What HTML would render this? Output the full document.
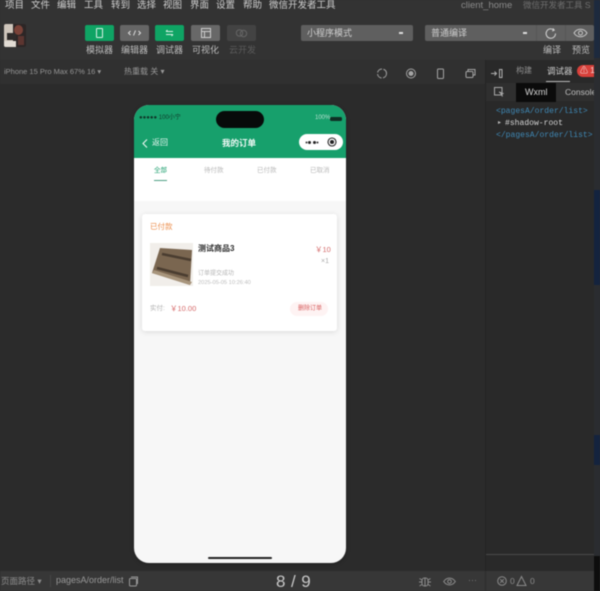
<!DOCTYPE html>
<html><head><meta charset="utf-8">
<style>
html,body{margin:0;padding:0;background:#2d2d2d}
#r{position:relative;width:600px;height:591px;overflow:hidden;background:#2d2d2d;font-family:"Liberation Sans","Noto Sans CJK SC",sans-serif;filter:blur(.5px)}
#r div,#r svg,#r span.a{position:absolute}
.t{white-space:nowrap;line-height:1}
.btn{width:29px;height:16px;top:25px;border-radius:2px}
.lb{top:46px;font-size:9px;color:#bdbdbd;white-space:nowrap;line-height:1}
.m{top:1px;font-size:9.5px;color:#d0d0d0;white-space:nowrap;line-height:1}
.mono{font-family:"Liberation Mono","DejaVu Sans Mono",monospace;font-size:8.05px;line-height:1;white-space:nowrap}
</style></head><body>
<div id="r">
<!-- top bars -->
<div style="left:0;top:0;width:600px;height:60px;background:#333"></div>
<div style="left:0;top:60px;width:486px;height:24px;background:#303030"></div>
<div style="left:0;top:84px;width:486px;height:487px;background:#2b2b2b"></div>
<div style="left:486px;top:60px;width:108px;height:511px;background:#292929"></div>
<div style="left:485px;top:60px;width:1px;height:511px;background:#242424"></div>
<div style="left:594px;top:0;width:6px;height:591px;background:#2a2c30"></div>
<div style="left:594px;top:0;width:6px;height:58px;background:#1d2a3e"></div>
<div style="left:594px;top:190px;width:6px;height:50px;background:#13233f"></div>
<div style="left:594px;top:240px;width:6px;height:45px;background:#14233e"></div>
<div style="left:594px;top:435px;width:6px;height:30px;background:#14233e"></div>
<div style="left:594px;top:556px;width:6px;height:35px;background:#0d0d0d"></div>
<!-- menu -->
<div class="m" style="left:5px">项目</div>
<div class="m" style="left:31px">文件</div>
<div class="m" style="left:57px">编辑</div>
<div class="m" style="left:84px">工具</div>
<div class="m" style="left:111px">转到</div>
<div class="m" style="left:137px">选择</div>
<div class="m" style="left:163px">视图</div>
<div class="m" style="left:190px">界面</div>
<div class="m" style="left:216px">设置</div>
<div class="m" style="left:243px">帮助</div>
<div class="m" style="left:269px">微信开发者工具</div>
<div class="t" style="left:461px;top:1px;font-size:9.5px;color:#8a8a8a">client_home</div>
<div class="t" style="left:523px;top:1px;font-size:8.5px;color:#6f6f6f">微信开发者工具 S</div>
<!-- avatar -->
<div style="left:4px;top:24px;width:22px;height:23px;background:#2c2626;border-radius:2px;overflow:hidden">
  <div style="left:0;top:0;width:9px;height:23px;background:#cfc6bc"></div>
  <div style="left:3px;top:9px;width:9px;height:7px;background:#2e2b2a"></div>
  <div style="left:0;top:17px;width:12px;height:6px;background:#e2dcd4"></div>
  <div style="left:10px;top:1px;width:9px;height:10px;background:#7a4238;border-radius:50%"></div>
  <div style="left:14px;top:12px;width:6px;height:9px;background:#5c3530"></div>
</div>
<!-- toolbar buttons -->
<div class="btn" style="left:85px;background:#0fa464"></div>
<div class="btn" style="left:120px;background:#666"></div>
<div class="btn" style="left:155px;background:#0fa464"></div>
<div class="btn" style="left:191px;background:#686868"></div>
<div class="btn" style="left:227px;background:#434343"></div>
<svg style="left:85px;top:25px" width="29" height="16" fill="none" stroke="#d9f2e6" stroke-width="1"><rect x="11.5" y="3.5" width="6" height="9" rx=".5"/></svg>
<svg style="left:120px;top:25px" width="29" height="16" fill="none" stroke="#e0e0e0" stroke-width="1"><path d="M10.500 6l-2 2 2 2M18.500 6l2 2-2 2M15.500 5.500l-2 5"/></svg>
<svg style="left:155px;top:25px" width="29" height="16" fill="none" stroke="#d9f2e6" stroke-width="1"><path d="M11 6.500h7M11 9.500h7M12.500 5l-1.500 1.500M16.500 11l1.500-1.500"/></svg>
<svg style="left:191px;top:25px" width="29" height="16" fill="none" stroke="#cfcfcf" stroke-width="1"><rect x="10.500" y="3.500" width="9" height="9"/><path d="M10.500 6.500h9M13.500 6.500v6"/></svg>
<svg style="left:227px;top:25px" width="29" height="16" fill="none" stroke="#666" stroke-width="1"><circle cx="12.500" cy="8" r="3.200"/><circle cx="16.500" cy="8.500" r="3.200"/></svg>
<div class="lb" style="left:86px">模拟器</div>
<div class="lb" style="left:121px">编辑器</div>
<div class="lb" style="left:156px">调试器</div>
<div class="lb" style="left:192px">可视化</div>
<div class="lb" style="left:229px;color:#5b5b5b">云开发</div>
<!-- selects -->
<div style="left:301px;top:25px;width:112px;height:16px;background:#5f5f5f;border-radius:2px"></div>
<div class="t" style="left:307px;top:29px;font-size:9px;color:#cfcfcf">小程序模式</div>
<div style="left:399px;top:32px;width:4px;height:2px;background:#ddd"></div>
<div style="left:425px;top:25px;width:169px;height:16px;background:#5f5f5f;border-radius:2px"></div>
<div class="t" style="left:431px;top:29px;font-size:9px;color:#cfcfcf">普通编译</div>
<div style="left:523px;top:32px;width:4px;height:2px;background:#ddd"></div>
<div style="left:536px;top:25px;width:1px;height:16px;background:#565656"></div>
<div style="left:565px;top:25px;width:1px;height:16px;background:#565656"></div>
<svg style="left:544px;top:27px" width="14" height="13" fill="none" stroke="#d4d4d4" stroke-width="1"><path d="M11.500 6.500a4.700 4.700 0 1 1-1.600-3.500"/><path d="M9 1.500l1.200 1.700-2 .8"/></svg>
<svg style="left:573px;top:28px" width="15" height="10" fill="none" stroke="#c8c8c8" stroke-width="1"><path d="M1 5c3-5 10-5 13 0-3 5-10 5-13 0z"/><circle cx="7.500" cy="5" r="2"/></svg>
<div class="t" style="left:543px;top:46px;font-size:9px;color:#bdbdbd">编译</div>
<div class="t" style="left:572px;top:46px;font-size:9px;color:#bdbdbd">预览</div>
<!-- device bar -->
<div class="t" style="left:4px;top:68px;font-size:7.500px;color:#969696">iPhone 15 Pro Max 67% 16 ▾</div>
<div class="t" style="left:124px;top:68px;font-size:8px;color:#999">热重载 关 ▾</div>
<svg style="left:376px;top:67px" width="100" height="13" fill="none" stroke="#a4a4a4" stroke-width="1"><circle cx="6" cy="6.500" r="4.500" stroke-dasharray="6 1.500"/><circle cx="35" cy="6.500" r="4.500"/><circle cx="35" cy="6.500" r="2" fill="#a4a4a4"/><rect x="61.500" y="2" width="6" height="9.500" rx="1"/><rect x="90" y="4.500" width="7" height="6" rx="1"/><path d="M92 4.500V2.500h7v5.500h-2"/></svg>
<!-- devtools tabs -->
<svg style="left:490px;top:67px" width="14" height="13" fill="none" stroke="#b0b0b0" stroke-width="1"><path d="M1 6.500h5M4.500 4.500l2 2-2 2"/><rect x="9.500" y="2.500" width="2.500" height="8"/></svg>
<div class="t" style="left:516px;top:67px;font-size:8px;color:#8d8d8d">构建</div>
<div class="t" style="left:547px;top:67px;font-size:8.500px;color:#cfcfcf">调试器</div>
<div style="left:546px;top:81px;width:24px;height:1px;background:#bbb"></div>
<div style="left:577px;top:65px;width:17px;height:12px;background:#d8403a;border-radius:6px 0 0 6px"></div>
<div class="t" style="left:580px;top:67px;font-size:8px;color:#f4d6d4">&#9888; 1</div>
<div style="left:486px;top:83px;width:108px;height:18px;background:#2f2f2f"></div>
<svg style="left:493px;top:86px" width="12" height="12" fill="none" stroke="#a8a8a8" stroke-width="1"><rect x="1.500" y="1.500" width="7.500" height="7.500"/><path d="M6 6l4 1.500-1.500 1 1 2" fill="#a8a8a8"/></svg>
<div style="left:516px;top:83px;width:40px;height:19px;background:#0b0b0b"></div>
<div class="t" style="left:525px;top:88px;font-size:9px;color:#d6d6d6">Wxml</div>
<div class="t" style="left:565px;top:88px;font-size:8.500px;color:#bdbdbd;width:29px;overflow:hidden">Console</div>
<div class="mono" style="left:496px;top:108px;color:#3f88b5">&lt;pagesA/order/list&gt;</div>
<div class="t" style="left:498px;top:120px;font-size:6px;color:#bbb">▸</div>
<div class="mono" style="left:505px;top:120px;color:#d6d6d6">#shadow-root</div>
<div class="mono" style="left:496px;top:132px;color:#3f88b5">&lt;/pagesA/order/list&gt;</div>
<div style="left:486px;top:554px;width:108px;height:1px;background:#4a4a4a"></div>
<!-- status bar -->
<div style="left:0;top:571px;width:594px;height:20px;background:#373737"></div>
<div style="left:485px;top:571px;width:1px;height:20px;background:#2c2c2c"></div>
<div class="t" style="left:1px;top:577px;font-size:8.500px;color:#8c8c8c">页面路径 ▾</div>
<div style="left:50px;top:575px;width:1px;height:12px;background:#474747"></div>
<div class="t" style="left:56px;top:576px;font-size:9px;color:#989898">pagesA/order/list</div>
<svg style="left:128px;top:576px" width="11" height="11" fill="none" stroke="#999" stroke-width="1"><rect x="1.500" y="2.500" width="7" height="7.500" rx="1"/><path d="M3 1h6.500v7"/></svg>
<div class="t" style="left:276px;top:573px;font-size:17px;color:#c8c8c8;letter-spacing:.4px">8 / 9</div>
<svg style="left:418px;top:575px" width="14" height="13" fill="none" stroke="#8e8e8e" stroke-width="1"><rect x="4" y="3" width="6" height="8" rx="2.500"/><path d="M7 3v8M1.500 3.500L4 5M12.500 3.500L10 5M1 7h3M10 7h3M1.500 11L4 9.500M12.500 11L10 9.500"/></svg>
<svg style="left:443px;top:577px" width="13" height="9" fill="none" stroke="#8e8e8e" stroke-width="1"><path d="M.7 4.500c3-4.500 8.500-4.500 11.600 0-3 4.500-8.600 4.500-11.600 0z"/><circle cx="6.500" cy="4.500" r="1.800"/></svg>
<div class="t" style="left:468px;top:576px;font-size:9px;color:#777">···</div>
<svg style="left:497px;top:575px" width="36" height="12" fill="none" stroke="#8a8a8a" stroke-width="1"><circle cx="5" cy="6" r="4.300"/><path d="M3.200 4.200l3.600 3.600M6.800 4.200L3.200 7.800"/><path d="M24.500 1.500l4.500 9h-9z"/></svg>
<div class="t" style="left:510px;top:577px;font-size:8.500px;color:#8a8a8a">0</div>
<div class="t" style="left:530px;top:577px;font-size:8.500px;color:#8a8a8a">0</div>
<!-- phone -->
<div style="left:134px;top:105px;width:212px;height:458px;background:#f7f7f7;border-radius:15px;overflow:hidden;box-shadow:0 1px 4px rgba(0,0,0,.25)">
  <div style="left:0;top:0;width:212px;height:53px;background:#17a06c"></div>
  <div style="left:0;top:53px;width:212px;height:43px;background:#fff"></div>
  <div style="left:82px;top:6px;width:48px;height:17px;border-radius:9px;background:#070b0a"></div>
  <div class="t" style="left:5px;top:10px;font-size:6px;color:#10382a">●●●●● 100小宁</div>
  <div class="t" style="left:181px;top:10px;font-size:6px;color:#b7ded0">100%</div>
  <div style="left:196px;top:11.500px;width:12px;height:4.500px;background:#0f2f24;border-radius:1.500px"></div>
  <svg style="left:7px;top:33px" width="8" height="11" fill="none" stroke="#eef8f3" stroke-width="1.100"><path d="M6 1.500L2 5.500 6 9.500"/></svg>
  <div class="t" style="left:18px;top:34px;font-size:8px;color:#e6f5ef">返回</div>
  <div class="t" style="left:88px;top:34px;font-size:8.500px;font-weight:bold;color:#f2faf7">我的订单</div>
  <div style="left:165px;top:29px;width:44px;height:16px;background:#fff;border-radius:8px"></div>
  <div style="left:174px;top:35.500px;width:3px;height:3px;background:#222;border-radius:50%;box-shadow:5px 0 0 #222,-3px 0 0 -.5px #333,8px 0 0 -.5px #333"></div>
  <svg style="left:192px;top:31px" width="12" height="12" fill="none" stroke="#222" stroke-width="1.100"><circle cx="6" cy="6" r="4"/><circle cx="6" cy="6" r="1.500" fill="#222"/></svg>
  <div class="t" style="left:20px;top:63px;font-size:6.500px;color:#20a070">全部</div>
  <div style="left:20px;top:75px;width:13px;height:1px;background:#4f9f83"></div>
  <div class="t" style="left:70px;top:63px;font-size:6.500px;color:#b8b8b8">待付款</div>
  <div class="t" style="left:123px;top:63px;font-size:6.500px;color:#b8b8b8">已付款</div>
  <div class="t" style="left:176px;top:63px;font-size:6.500px;color:#b8b8b8">已取消</div>
  <!-- card -->
  <div style="left:8px;top:109px;width:195px;height:117px;background:#fff;border-radius:3px;box-shadow:0 1px 6px rgba(0,0,0,.12)"></div>
  <div class="t" style="left:16px;top:118px;font-size:7.500px;color:#ec8f4e">已付款</div>
  <div style="left:16px;top:138px;width:43px;height:43px;background:#f1eeea"></div>
  <svg style="left:16px;top:138px" width="43" height="43"><path d="M2 30L10 5l32 2-2 35z" fill="#7a6650"/><path d="M2 30l38 12 2-3-38-12z" fill="#a8957c"/><path d="M12 11l29 6M7 25l31 8" stroke="#4a3d30" stroke-width="2.500" fill="none"/></svg>
  <div class="t" style="left:64px;top:140px;font-size:8px;font-weight:bold;color:#2b2b2b">测试商品3</div>
  <div class="t" style="left:181px;top:141px;font-size:7.500px;color:#d46a6a">￥10</div>
  <div class="t" style="left:187px;top:153px;font-size:7px;color:#aaa">×1</div>
  <div class="t" style="left:64px;top:166px;font-size:6px;color:#b5b5b5">订单提交成功</div>
  <div class="t" style="left:64px;top:176px;font-size:5.700px;color:#bdbdbd">2025-05-05 10:26:40</div>
  <div class="t" style="left:16px;top:201px;font-size:6.500px;color:#b0b0b0">实付:</div>
  <div class="t" style="left:36px;top:200px;font-size:7.500px;color:#d66a6a">￥10.00</div>
  <div style="left:156px;top:197px;width:38px;height:14px;background:#fef3f3;border-radius:7px"></div>
  <div class="t" style="left:164px;top:201px;font-size:6px;color:#d65c5c">删除订单</div>
  <div style="left:74px;top:452px;width:64px;height:2px;background:#222;border-radius:1px"></div>
</div>
</div>
</body></html>
